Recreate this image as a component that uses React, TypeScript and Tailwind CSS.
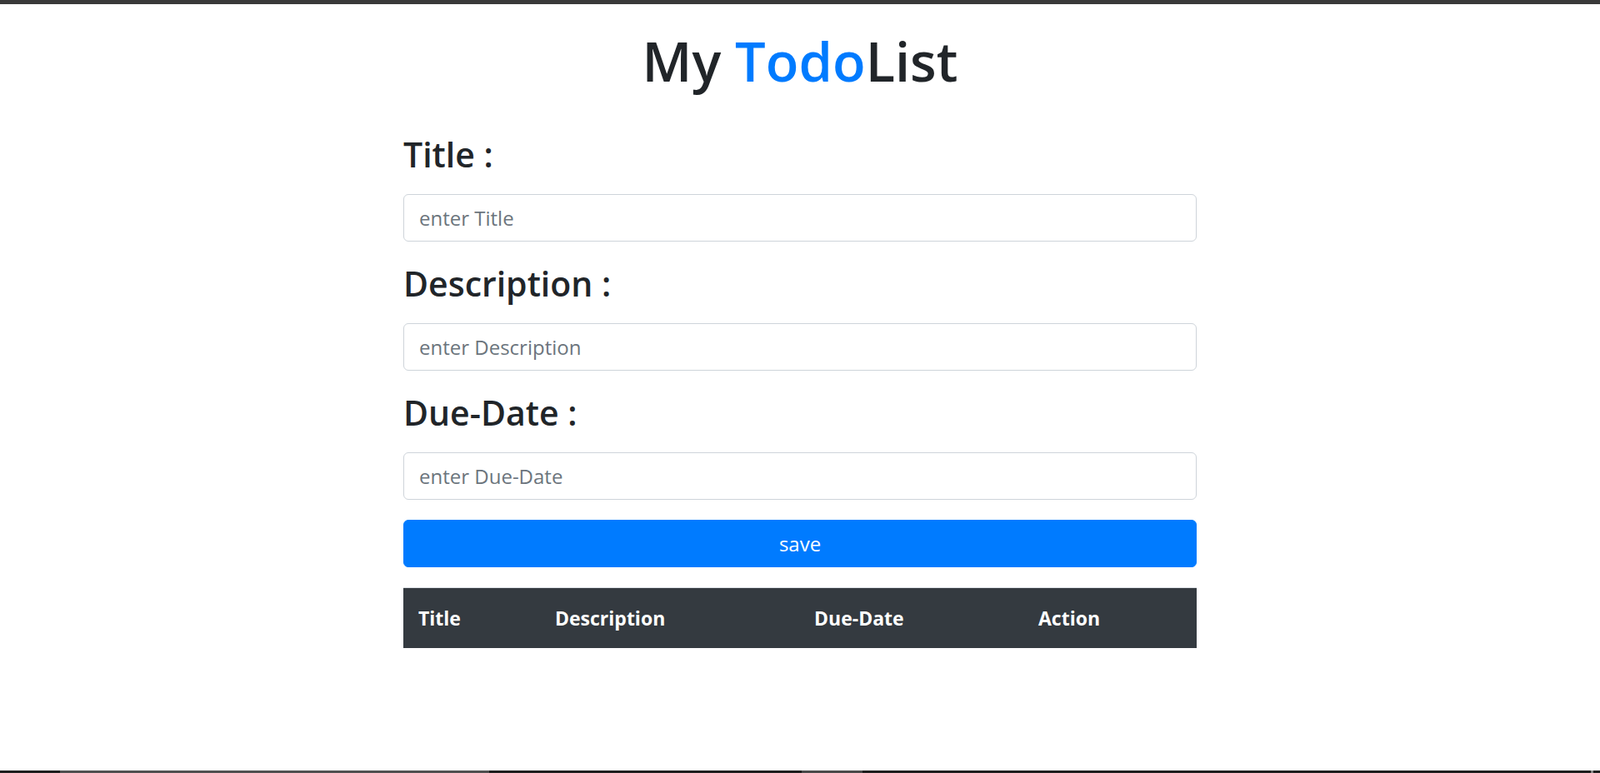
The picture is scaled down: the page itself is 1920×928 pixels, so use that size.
import { useState } from "react";

interface Todo {
  title: string;
  description: string;
  dueDate: string;
}

const fields = [
  { key: "title", label: "Title :", placeholder: "enter Title" },
  { key: "description", label: "Description :", placeholder: "enter Description" },
  { key: "dueDate", label: "Due-Date :", placeholder: "enter Due-Date" },
] as const;

export default function App() {
  const [form, setForm] = useState<Todo>({ title: "", description: "", dueDate: "" });
  const [todos, setTodos] = useState<Todo[]>([]);

  const handleSave = () => {
    if (!form.title) return;
    setTodos([...todos, form]);
    setForm({ title: "", description: "", dueDate: "" });
  };

  return (
    <div className="min-h-screen flex flex-col bg-white text-[#212529] font-['Open_Sans',sans-serif]">
      {/* top strip */}
      <div className="h-[5px] bg-[#393939]" />

      <h1 className="mt-[28px] text-center text-[65px] leading-[80px] font-semibold">
        My <span className="text-[#007bff]">Todo</span>List
      </h1>

      <div className="mx-auto mt-[46px] w-[952px]">
        {fields.map((f) => (
          <div key={f.key} className="mb-6">
            <h3 className="mb-[22px] text-[41px] leading-[52px] font-semibold">{f.label}</h3>
            <input
              type="text"
              value={form[f.key]}
              onChange={(e) => setForm({ ...form, [f.key]: e.target.value })}
              placeholder={f.placeholder}
              className="block h-[57px] w-full rounded-[6px] border border-[#ced4da] bg-white px-[18px] text-[24px] leading-[36px] text-[#495057] placeholder:text-[#6c757d] outline-none"
            />
          </div>
        ))}

        <button
          onClick={handleSave}
          className="flex h-[57px] w-full items-center justify-center rounded-[6px] border border-[#007bff] bg-[#007bff] text-[24px] leading-[36px] text-white"
        >
          save
        </button>

        <table className="mt-6 w-full border-collapse text-[23px] leading-[36px]">
          <thead>
            <tr className="bg-[#343a40] text-white">
              <th className="w-[164px] border-t border-[#dee2e6] px-[18px] py-[18px] text-left font-bold">Title</th>
              <th className="w-[311px] border-t border-[#dee2e6] px-[18px] py-[18px] text-left font-bold">Description</th>
              <th className="w-[269px] border-t border-[#dee2e6] px-[18px] py-[18px] text-left font-bold">Due-Date</th>
              <th className="w-[208px] border-t border-[#dee2e6] px-[18px] py-[18px] text-left font-bold">Action</th>
            </tr>
          </thead>
          <tbody>
            {todos.map((t, i) => (
              <tr key={i} className="border-t border-[#dee2e6]">
                <td className="px-[18px] py-[18px]">{t.title}</td>
                <td className="px-[18px] py-[18px]">{t.description}</td>
                <td className="px-[18px] py-[18px]">{t.dueDate}</td>
                <td className="px-[18px] py-[18px]"></td>
              </tr>
            ))}
          </tbody>
        </table>
      </div>

      {/* bottom strip */}
      <div className="mt-auto flex h-[3px] bg-[#1e1e1e]">
        <div className="w-[72px]" />
        <div className="w-[515px] bg-[#505050]" />
        <div className="w-[375px]" />
        <div className="w-[73px] bg-[#4a4a4a]" />
        <div className="w-[874px]" />
        <div className="w-[3px] bg-[#888888]" />
      </div>
    </div>
  );
}
